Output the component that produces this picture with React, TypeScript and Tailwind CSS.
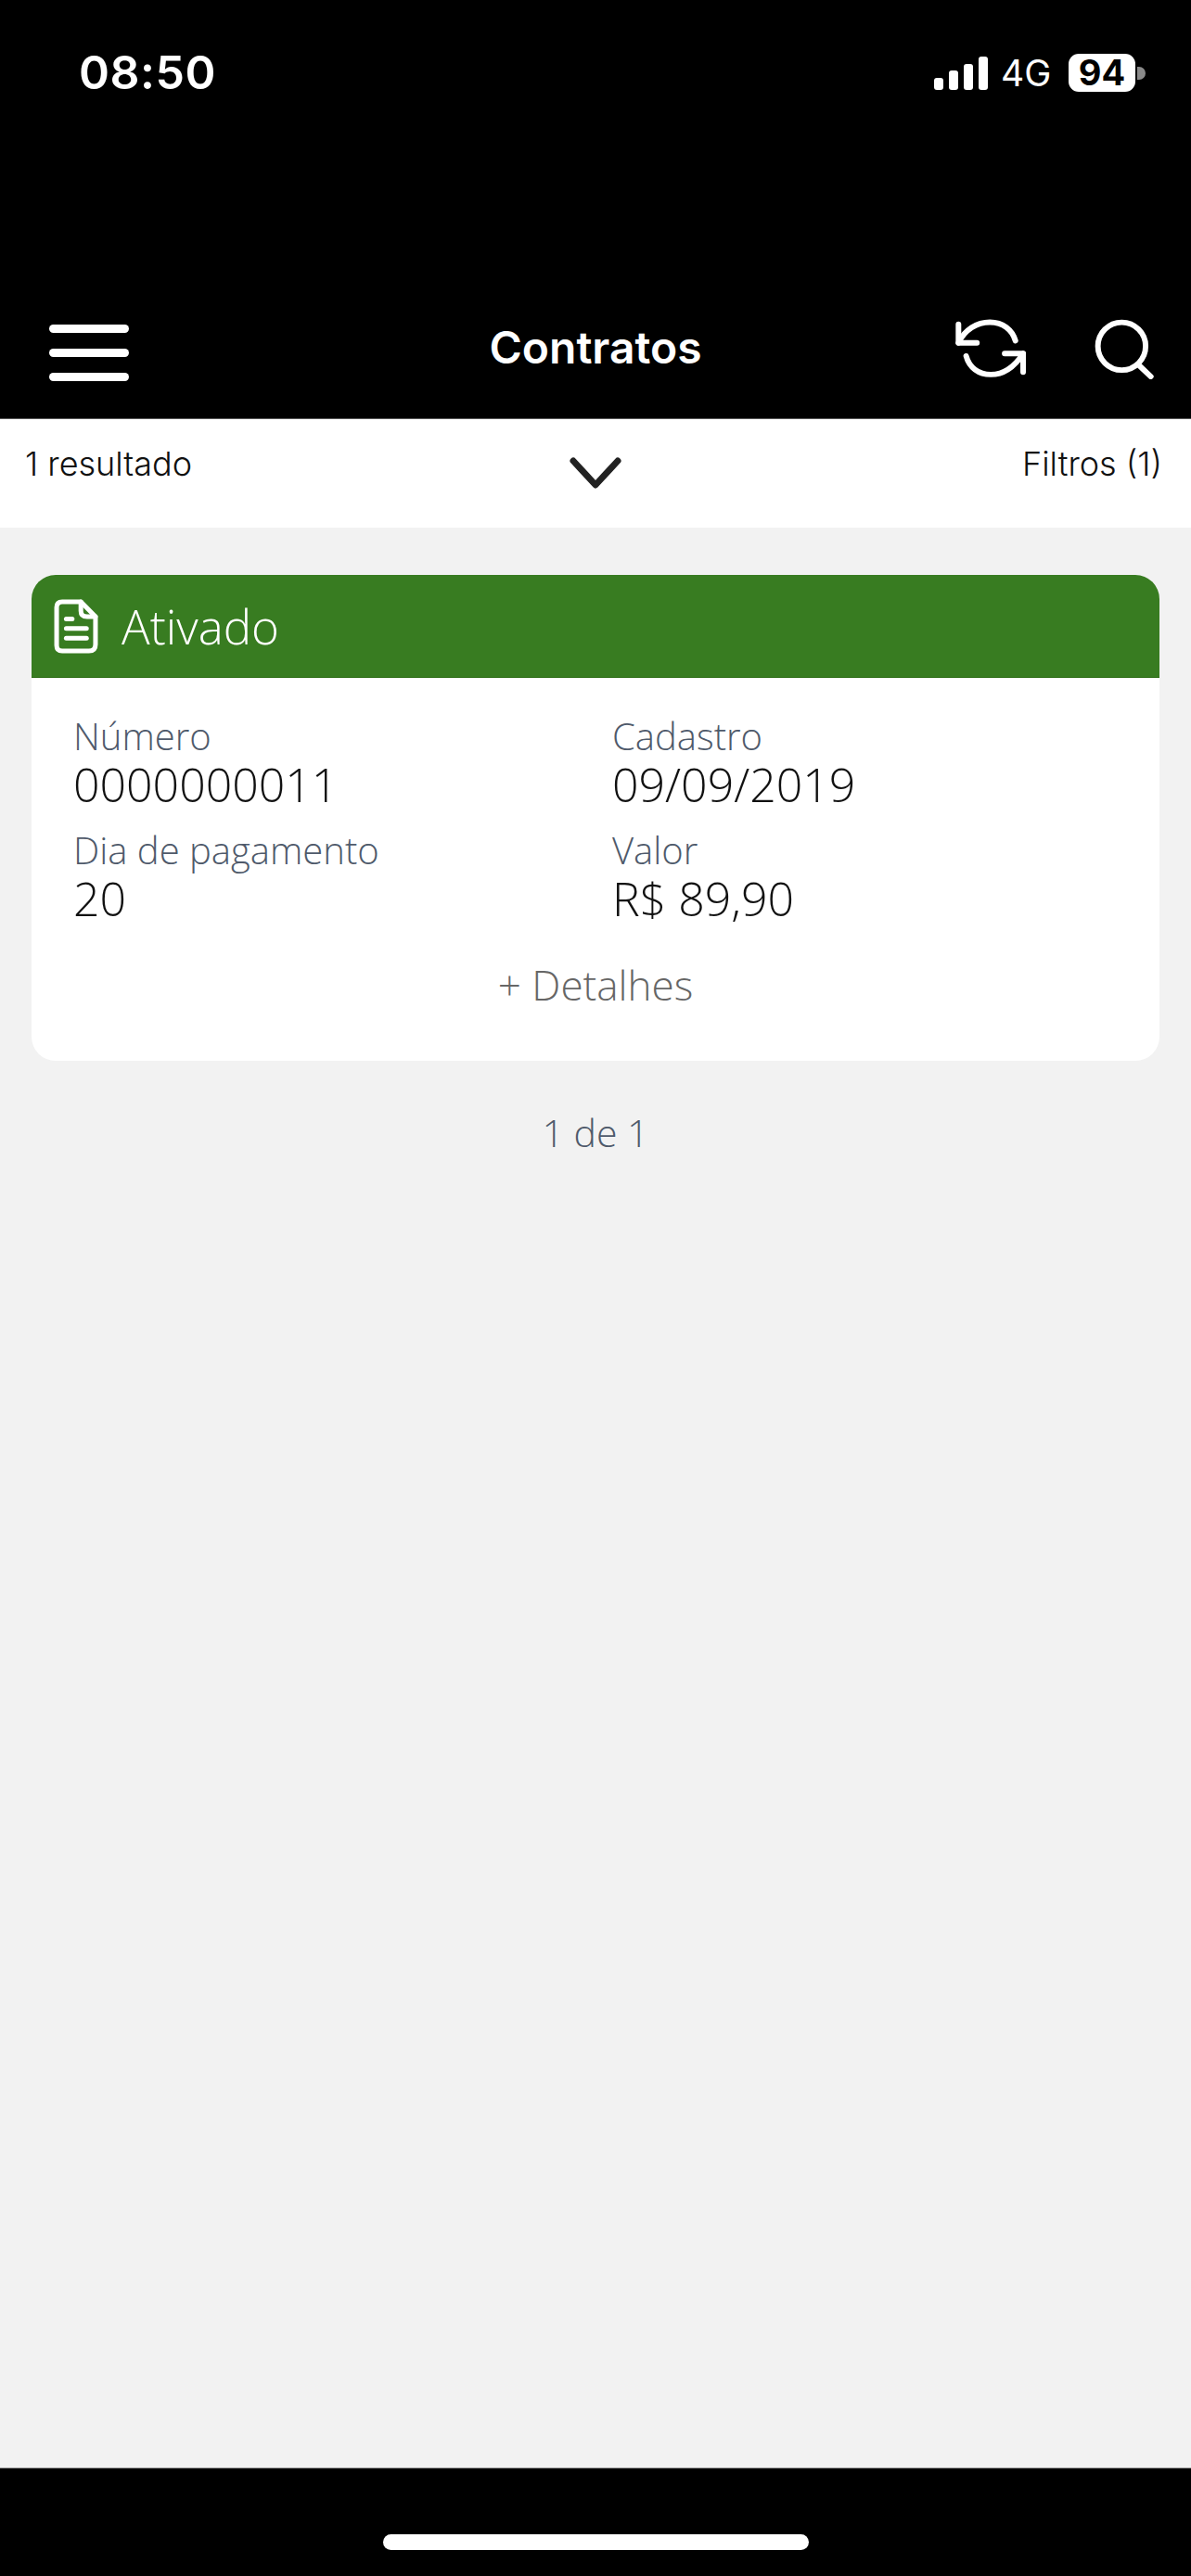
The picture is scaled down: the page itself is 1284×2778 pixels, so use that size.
import React from 'react';

const uiFont = "font-['Inter','Liberation_Sans',sans-serif]";
const cardFont = "font-['Open_Sans','Noto_Sans',sans-serif]";

function Field({ label, value }: { label: string; value: string }) {
  return (
    <div className="flex flex-col">
      <span className="text-[40px] leading-[50px] font-light text-[#4f5a6b]">{label}</span>
      <span className="text-[50px] leading-[54px] font-light text-[#111111]">{value}</span>
    </div>
  );
}

export default function App() {
  return (
    <div className={`w-[1284px] h-[2778px] flex flex-col bg-[#f2f2f2] ${uiFont}`}>
      <header className="h-[452px] shrink-0 bg-black border-b border-[#555555] flex flex-col text-white">
        {/* status bar */}
        <div className="h-[156px] pl-[85px] pr-[49px] pt-[50px] flex items-start justify-between">
          <span className="text-[50px] leading-[56px] font-semibold tracking-[0.5px]">08:50</span>
          <div className="flex items-center gap-[14px] pt-[8px]">
            <div className="flex items-end gap-[6px] h-[36px]">
              <div className="w-[10px] h-[13px] rounded-[3px] bg-white" />
              <div className="w-[10px] h-[21px] rounded-[3px] bg-white" />
              <div className="w-[10px] h-[28px] rounded-[3px] bg-white" />
              <div className="w-[10px] h-[36px] rounded-[3px] bg-white" />
            </div>
            <span className="text-[39px] leading-[40px] font-normal w-[57px]">4G</span>
            <div className="flex items-center gap-[2px] ml-[2px]">
              <div className="w-[72px] h-[41px] rounded-[11px] bg-white text-black text-[38px] leading-[41px] font-bold text-center">
                94
              </div>
              <div className="w-[9px] h-[14px] rounded-r-full bg-[#8a8a8a]" />
            </div>
          </div>
        </div>

        {/* nav bar */}
        <div className="flex-1 relative flex items-start justify-between pl-[53px] pr-[39px] pt-[188px]">
          <div className="flex flex-col gap-[17px] pt-[6px]">
            <div className="w-[86px] h-[9px] rounded-full bg-white" />
            <div className="w-[86px] h-[9px] rounded-full bg-white" />
            <div className="w-[86px] h-[9px] rounded-full bg-white" />
          </div>
          <span className="absolute left-0 right-0 top-[191px] text-center text-[48px] leading-[56px] font-semibold">
            Contratos
          </span>
          <div className="flex items-start gap-[72px]">
            <svg width="77" height="65" viewBox="150 75 232 195" fill="none" stroke="white" strokeWidth="18" strokeLinecap="round" strokeLinejoin="round">
              <path d="M160 92V152H220" />
              <path d="M160 152C180 110 220 85 262 85C305 85 335 110 345 145" />
              <path d="M185 195C195 232 225 255 265 255C310 255 345 225 370 187" />
              <path d="M310 187H370V247" />
            </svg>
            <svg width="66" height="65" viewBox="595 70 200 195" fill="none" stroke="white" strokeWidth="18" strokeLinecap="round">
              <circle cx="687" cy="158" r="78" />
              <path d="M745 222L782 257" />
            </svg>
          </div>
        </div>
      </header>

      {/* results bar */}
      <div className="h-[117px] shrink-0 bg-white relative flex items-start justify-between pl-[27px] pr-[31px] pt-[24px] text-[36px] leading-[48px] font-light text-[#111111]">
        <span>1 resultado</span>
        <svg className="absolute left-[612px] top-[40px]" width="60" height="36" viewBox="0 0 60 36" fill="none" stroke="#222222" strokeWidth="7" strokeLinecap="round" strokeLinejoin="round">
          <path d="M6 5L30 31L54 5" />
        </svg>
        <span>Filtros (1)</span>
      </div>

      <main className={`flex-1 flex flex-col px-[34px] pt-[51px] ${cardFont}`}>
        <div className="rounded-[26px] overflow-hidden bg-white">
          <div className="h-[111px] bg-[#387c21] border-b border-[#27690f] flex items-center gap-[25px] pl-[24px]">
            <svg width="48" height="59" viewBox="175 140 143 176" fill="none" stroke="white" strokeWidth="15" strokeLinecap="round" strokeLinejoin="round">
              <path d="M202 149H262L309 197V286Q309 307 288 307H202Q184 307 184 289V167Q184 149 202 149Z" />
              <path d="M262 149V178Q262 197 282 197H309" />
              <path d="M215 204H234" />
              <path d="M215 235H280" />
              <path d="M215 266H280" />
            </svg>
            <span className="text-[51px] leading-[60px] font-light text-white">Ativado</span>
          </div>

          <div className="px-[45px] pt-[38px] pb-[52px] flex flex-col">
            <div className="grid grid-cols-[581px_1fr] gap-y-[19px]">
              <Field label="Número" value="0000000011" />
              <Field label="Cadastro" value="09/09/2019" />
              <Field label="Dia de pagamento" value="20" />
              <Field label="Valor" value="R$ 89,90" />
            </div>
            <div className="text-center text-[44px] leading-[60px] font-light text-[#666666] mt-[36px]">+ Detalhes</div>
          </div>
        </div>

        <div className="text-center text-[41px] leading-[54px] font-light text-[#4f5a6b] mt-[50px]">1 de 1</div>
      </main>

      <footer className="h-[117px] shrink-0 bg-black border-t border-[#999999] flex justify-center pt-[71px]">
        <div className="w-[459px] h-[17px] rounded-full bg-white" />
      </footer>
    </div>
  );
}
